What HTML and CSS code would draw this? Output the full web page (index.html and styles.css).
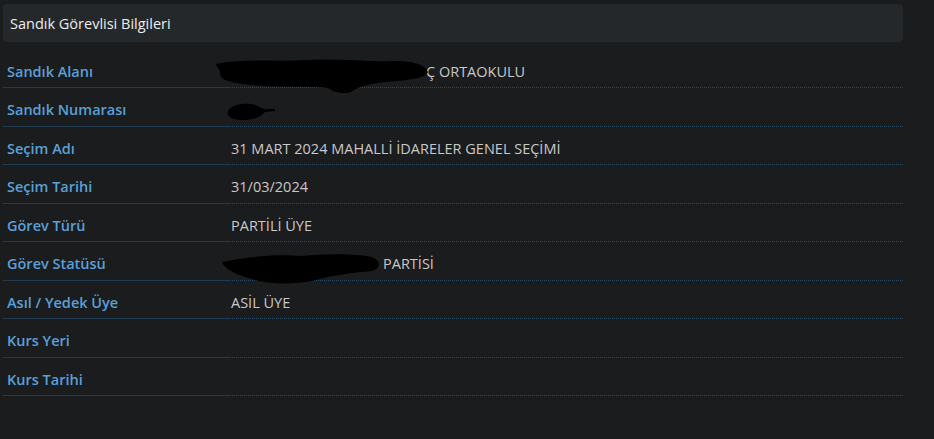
FILE: index.html
```html
<!DOCTYPE html>
<html lang="tr">
<head>
<meta charset="utf-8">
<link rel="stylesheet" href="styles.css">
</head>
<body>
<div class="page">
  <div class="panel-head">Sandık Görevlisi Bilgileri</div>
  <div class="info">
    <div class="row">
      <div class="label">Sandık Alanı</div>
      <div class="value"><span class="redact-wrap"><span class="hidden-text">S</span><svg class="blob blob-a" width="212" height="36" viewBox="0 0 212 36"><path d="M0 6 C30 0 60 4 90 2 C120 0 150 4 180 3 C200 3 210 8 212 14 C210 20 195 22 170 24 C150 26 140 30 135 34 C128 36 118 35 112 30 C90 28 60 30 35 27 C15 25 2 22 4 14 C3 10 0 8 0 6 Z" fill="#000"/></svg></span>Ç ORTAOKULU</div>
    </div>
    <div class="row">
      <div class="label">Sandık Numarası</div>
      <div class="value"><svg class="blob blob-b" width="52" height="20" viewBox="0 0 52 20"><path d="M3 9 C6 3 16 1 26 2 C32 3 36 6 40 7 L50 7 L50 9 L40 10 C36 15 28 18 18 18 C8 18 1 15 3 9 Z" fill="#000"/></svg></div>
    </div>
    <div class="row">
      <div class="label">Seçim Adı</div>
      <div class="value">31 MART 2024 MAHALLİ İDARELER GENEL SEÇİMİ</div>
    </div>
    <div class="row">
      <div class="label">Seçim Tarihi</div>
      <div class="value">31/03/2024</div>
    </div>
    <div class="row">
      <div class="label">Görev Türü</div>
      <div class="value">PARTİLİ ÜYE</div>
    </div>
    <div class="row">
      <div class="label">Görev Statüsü</div>
      <div class="value"><svg class="blob blob-c" width="160" height="32" viewBox="0 0 160 32"><path d="M0 9 C25 4 50 1 80 3 C100 1 130 0 150 4 C160 8 158 16 150 18 C130 20 110 22 90 28 C70 32 45 31 30 26 C15 22 2 16 0 9 Z" fill="#000"/></svg>PARTİSİ</div>
    </div>
    <div class="row">
      <div class="label">Asıl / Yedek Üye</div>
      <div class="value">ASİL ÜYE</div>
    </div>
    <div class="row">
      <div class="label">Kurs Yeri</div>
      <div class="value"></div>
    </div>
    <div class="row">
      <div class="label">Kurs Tarihi</div>
      <div class="value"></div>
    </div>
  </div>
</div>
</body>
</html>
```

FILE: styles.css
```css
html, body {
  margin: 0;
  padding: 0;
  background: #1b1c1e;
}
body {
  font-family: "Open Sans", "Liberation Sans", sans-serif;
  font-size: 14.5px;
}
.page {
  width: 900px;
  padding: 4px 0 0 3px;
}
.panel-head {
  height: 38px;
  display: flex;
  align-items: center;
  padding-left: 7px;
  background: #25282a;
  border-radius: 4px;
  color: #ececec;
}
.info {
  margin-top: 7.5px;
}
.row {
  display: grid;
  grid-template-columns: 225px 1fr;
  height: 38.5px;
}
.label, .value {
  box-sizing: border-box;
  height: 38.5px;
  padding-top: 12px;
  line-height: 20px;
  white-space: nowrap;
}
.label {
  padding-left: 4px;
  color: #5aa0d8;
  font-weight: 600;
  border-bottom: 1px solid #1f3b52;
}
.value {
  padding-left: 3px;
  color: #c8c8c8;
  border-bottom: 1px dotted #28495f;
  display: flex;
  align-items: flex-start;
}
.redact-wrap {
  position: relative;
  display: inline-block;
  width: 195px;
}
.hidden-text {
  color: #c8c8c8;
}
.blob {
  display: block;
}
.blob-a {
  position: absolute;
  left: -15px;
  top: -4px;
}
.blob-b {
  margin-left: -6px;
  margin-top: 2px;
}
.blob-c {
  margin-left: -9px;
  margin-right: 1px;
  margin-top: -1px;
}
```
